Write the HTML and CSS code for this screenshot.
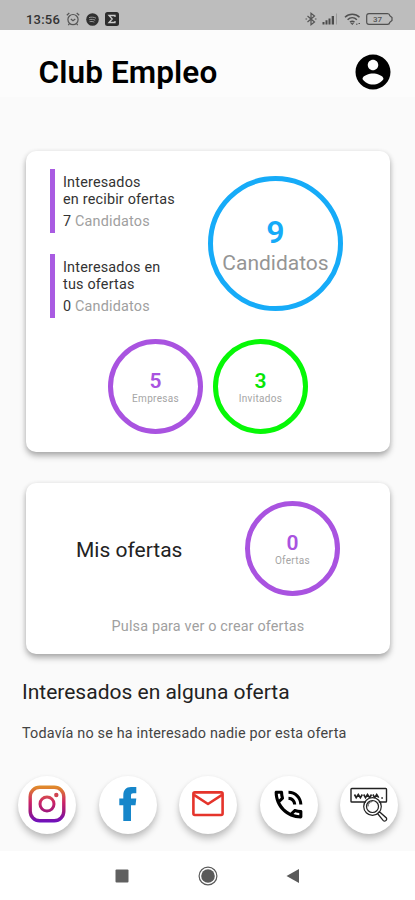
FILE: index.html
```
<!DOCTYPE html>
<html lang="es">
<head>
<meta charset="utf-8">
<title>Club Empleo</title>
<link rel="stylesheet" href="styles.css">
</head>
<body>
<div class="status">
  <span class="time">13:56</span>
  <svg class="s-alarm" width="14" height="14" viewBox="0 0 14 14" fill="none" stroke="#555" stroke-width="1.2"><circle cx="7" cy="7.6" r="5.1"/><path d="M.8 3.2 3.3 1M13.2 3.2 10.7 1M4.8 7l2.200 1.800L9.300 7M3.300 11.800l-1 1.300M10.700 11.800l1 1.300"/></svg>
  <svg class="s-spot" width="13" height="13" viewBox="0 0 13 13"><circle cx="6.500" cy="6.500" r="6.300" fill="#303030"/><path d="M3 4.600c2.500-.8 5-.5 7 .6M3.300 6.700c2.200-.6 4-.4 5.900.5M3.600 8.700c1.800-.4 3.300-.3 4.700.5" stroke="#999" fill="none"/></svg>
  <svg class="s-sigma" width="14" height="14" viewBox="0 0 14 14"><rect width="14" height="14" rx="2.500" fill="#2c2c2c"/><path d="M10 5V3.500H4L7.200 7 4 10.500h6V9" stroke="#ccc" stroke-width="1.300" fill="none"/></svg>
  <span class="spacer"></span>
  <svg class="s-bt" width="12" height="14" viewBox="0 0 12 14" fill="none" stroke="#555" stroke-width="1.200"><path d="m2.500 4 7 6L6 12.700V1.300L9.500 4l-7 6"/><path d="M.5 7h1.600M9.900 7h1.600"/></svg>
  <svg class="s-signal" width="16" height="12" viewBox="0 0 16 12"><path d="M.5 9h2v2.500h-2zM3.500 7.300h2v4.200h-2zM6.500 5.500h2v6h-2zM9.700 3h2.300v8.500H9.700z" fill="#4b4b4b"/><path d="M14 .5h1v11h-1z" fill="#999"/></svg>
  <svg class="s-wifi" width="17" height="13" viewBox="0 0 17 13" fill="none" stroke="#505050" stroke-width="1.500"><path d="M1 4.300c4-4 10.500-4 14.500 0M3.600 6.700c2.700-2.500 6.600-2.500 9.300 0M6 9.100c1.500-1.200 3-1.200 4.500 0"/><path d="m7 10.300 1.200 1.300 1.300-1.300zM12 11.200h1.500M14.500 10.500h1.500" stroke-width="1"/></svg>
  <span class="battery"><svg width="27" height="12" viewBox="0 0 27 12"><path d="M3 .7h18.500q2 0 2.300 2L26 4.500v3l-2.200 1.800q-.3 2-2.300 2H3q-2.300 0-2.300-2.300V3Q.7.700 3 .7z" fill="none" stroke="#505050" stroke-width="1.200"/></svg><b>37</b></span>
</div>

<header class="header">
  <h1>Club Empleo</h1>
  <svg width="42" height="42" viewBox="0 0 24 24"><path d="M12 2C6.480 2 2 6.480 2 12s4.480 10 10 10 10-4.480 10-10S17.520 2 12 2zm0 3c1.660 0 3 1.340 3 3s-1.340 3-3 3-3-1.340-3-3 1.340-3 3-3zm0 14.200c-2.500 0-4.710-1.280-6-3.220.03-1.990 4-3.080 6-3.080 1.990 0 5.970 1.090 6 3.080-1.290 1.940-3.500 3.220-6 3.220z"/></svg>
</header>

<main>
  <section class="card summary">
    <div class="top">
      <div class="stats">
        <div class="stat"><p>Interesados<br>en recibir ofertas</p><p class="count">7 <span>Candidatos</span></p></div>
        <div class="stat"><p>Interesados en<br>tus ofertas</p><p class="count">0 <span>Candidatos</span></p></div>
      </div>
      <div class="ring big blue"><b>9</b><span>Candidatos</span></div>
    </div>
    <div class="bottom">
      <div class="ring purple"><b>5</b><span>Empresas</span></div>
      <div class="ring green"><b>3</b><span>Invitados</span></div>
    </div>
  </section>

  <section class="card offers">
    <div class="offers-row">
      <h2>Mis ofertas</h2>
      <div class="ring purple"><b>0</b><span>Ofertas</span></div>
    </div>
    <p class="hint">Pulsa para ver o crear ofertas</p>
  </section>

  <section class="interest">
    <h2>Interesados en alguna oferta</h2>
    <p>Todavía no se ha interesado nadie por esta oferta</p>
  </section>
</main>

<div class="actions">
  <a class="fab"><svg width="38" height="38" viewBox="0 0 38 38" fill="none"><defs><linearGradient id="ig" gradientUnits="userSpaceOnUse" x1="19" y1="0" x2="19" y2="38"><stop offset=".05" stop-color="#e08a2c"/><stop offset=".45" stop-color="#cc2366"/><stop offset=".7" stop-color="#a0187c"/><stop offset="1" stop-color="#6a10c4"/></linearGradient></defs><rect x="2.200" y="2.200" width="33.600" height="33.600" rx="9.500" stroke="url(#ig)" stroke-width="3.400"/><circle cx="19" cy="19" r="7" stroke="url(#ig)" stroke-width="3"/><circle cx="28.300" cy="10" r="2.200" fill="#cf4450"/></svg></a>
  <a class="fab"><svg width="20" height="36" viewBox="0 0 20 36"><path d="M5.300 35V19.300H1.300v-6.800h4V9.500C5.300 4 8 1 13 1h5.300v6.300h-3c-1.700 0-2.300.7-2.300 2.200v3h5.300l-.8 6.800H13V35z" fill="#1686ca"/></svg></a>
  <a class="fab"><svg width="32" height="26" viewBox="0 0 32 26" fill="none" stroke="#e5342b" stroke-width="2.600" stroke-linejoin="round"><rect x="1.400" y="1.400" width="29.200" height="22.600" rx="1.500"/><path d="m2 3.800 14 9.200 14-9.200"/></svg></a>
  <a class="fab"><svg width="37" height="37" viewBox="0 0 24 24"><path d="M20 15.500c-1.250 0-2.450-.2-3.570-.57-.1-.03-.21-.05-.31-.05-.26 0-.51.1-.71.290l-2.200 2.200c-2.830-1.440-5.150-3.750-6.590-6.590l2.200-2.200c.28-.28.360-.67.250-1.020C8.700 6.450 8.500 5.250 8.500 4c0-.55-.45-1-1-1H4c-.55 0-1 .45-1 1 0 9.390 7.610 17 17 17 .55 0 1-.45 1-1v-3.500c0-.55-.45-1-1-1zM5.030 5h1.500c.07.880.220 1.750.460 2.590L5.790 8.800c-.41-1.210-.67-2.480-.76-3.800zM19 18.970c-1.320-.09-2.600-.35-3.800-.76l1.200-1.200c.85.240 1.720.390 2.600.450v1.510zM19 12h2c0-4.970-4.030-9-9-9v2c3.870 0 7 3.130 7 7zM15 12h2c0-2.760-2.240-5-5-5v2c1.660 0 3 1.340 3 3z"/></svg></a>
  <a class="fab"><svg width="38" height="35" viewBox="0 0 38 35" fill="none" stroke="#222" stroke-width="1.200"><rect x="1" y="1.500" width="35.500" height="13.500" rx=".8" stroke-width="1.400"/><path d="m4.500 7.500 1.700 3.200L8.300 7.500l2.100 3.200 1.900-3.200m1.400 0 1.800 3.200 2-3.200 2.200 3.200 1.800-3.200m1.400 0 1.800 3.200 2-3.200 2 3.200M31.300 11h1.600" stroke-width="1.600"/><path d="M16.300 13.200a8.800 8.800 0 0 1 12.400 0l.5 12-6.700 3.100-8-5z" fill="#fff" stroke="none"/><circle cx="22.500" cy="19.500" r="8.800"/><circle cx="22.500" cy="19.500" r="6"/><path d="M18 19.500q0-4.500 4.500-5" stroke-width=".8"/><path d="m27.700 26.700 1.700-2 7 6.300q.8 1.700-.8 2.800-1.300.8-2.500-.4z" fill="#fff" stroke-width="1.300"/></svg></a>
</div>

<nav class="navbar">
  <svg width="14" height="14"><rect x=".5" y=".5" width="13" height="13" rx="1" fill="#606060"/></svg>
  <svg width="20" height="20" viewBox="0 0 20 20"><circle cx="10" cy="10" r="8.900" fill="none" stroke="#5a5a5a" stroke-width="1.200"/><circle cx="10" cy="10" r="6.800" fill="#5a5a5a"/></svg>
  <svg width="14" height="16" viewBox="0 0 14 16"><path d="M.5 8 13 1v14z" fill="#5a5a5a"/></svg>
</nav>
</body>
</html>
```
FILE: styles.css
```
* { box-sizing: border-box; margin: 0; padding: 0; }
body {
  width: 415px;
  height: 900px;
  overflow: hidden;
  display: flex;
  flex-direction: column;
  background: #fafafa;
  color: #222;
  font-family: Roboto, "Liberation Sans", sans-serif;
}
.status {
  height: 30px;
  flex: none;
  background: #bdbdbd;
  display: flex;
  align-items: center;
  padding: 8px 22px 0 26px;
}
.time { width: 40px; font-size: 13px; font-weight: 500; letter-spacing: .2px; color: #333; }
.s-spot { margin-left: 6px; }
.s-sigma { margin-left: 6px; }
.spacer { flex: 1; }
.s-signal { margin-left: 5px; }
.s-wifi { margin-left: 6px; }
.battery { display: grid; place-items: center start; margin-left: 5px; }
.battery svg, .battery b { grid-area: 1 / 1; }
.battery b { padding-left: 7px; font-size: 8px; font-weight: 500; color: #555; }
.header {
  height: 67px;
  flex: none;
  background: #fcfcfc;
  display: flex;
  align-items: flex-start;
  justify-content: space-between;
  padding: 21px 21px 0 38.500px;
}
h1 { font-size: 31.500px; line-height: 43px; font-weight: 600; letter-spacing: .1px; color: #000; }
main { padding: 54px 25px 0 26px; }
.card {
  background: #fff;
  border-radius: 10px;
  box-shadow: 0 4px 6px rgba(0, 0, 0, .28), 0 1px 5px rgba(0, 0, 0, .1);
}
.summary { height: 301px; padding: 18px 47px 0 24px; }
.top { display: flex; justify-content: space-between; }
.stats { display: flex; flex-direction: column; gap: 21px; }
.stat {
  height: 64px;
  border-left: 5px solid #a95be2;
  padding: 5px 0 0 8px;
  font-size: 14.400px;
  letter-spacing: .19px;
  line-height: 17px;
  color: #333;
}
.count { margin-top: 5px; }
.count span { color: #a0a0a0; }
.ring {
  width: 95px;
  height: 95px;
  border: 5px solid;
  border-radius: 50%;
  display: flex;
  flex-direction: column;
  align-items: center;
  padding-top: 25px;
}
.ring b { font-size: 21px; line-height: 24px; font-weight: 600; }
.ring span { font-size: 10px; line-height: 12px; letter-spacing: .3px; color: #a5a5a5; }
.ring.big { width: 135px; height: 135px; margin-top: 7px; padding-top: 33px; }
.big b { font-size: 32px; line-height: 36px; }
.big span { font-size: 21px; line-height: 26px; letter-spacing: 0; color: #959595; }
.blue { border-color: #16abf8; color: #16abf8; }
.purple { border-color: #a953e0; color: #a953e0; }
.green { border-color: #06f806; color: #06e606; }
.bottom { display: flex; gap: 10px; padding: 21px 0 0 58px; }
.offers { height: 171px; margin-top: 31px; padding-top: 18px; }
.offers-row { display: flex; align-items: center; justify-content: space-between; padding: 0 50px; }
.offers h2 { padding-top: 2px; font-size: 21px; font-weight: 400; line-height: 24px; }
.hint { margin-top: 22px; text-align: center; font-size: 14.400px; line-height: 18px; letter-spacing: .16px; color: #a0a0a0; }
.interest { margin: 26px 0 0 -4px; }
.interest h2 { font-size: 21px; font-weight: 400; line-height: 24px; }
.interest p { margin-top: 21px; font-size: 14.400px; line-height: 18px; letter-spacing: .18px; color: #444; }
.actions {
  flex: 1;
  display: flex;
  justify-content: space-between;
  align-items: flex-end;
  padding: 0 17px 17px 18px;
}
.fab {
  width: 58px;
  height: 58px;
  padding-bottom: 2px;
  border-radius: 50%;
  background: #fff;
  display: flex;
  align-items: center;
  justify-content: center;
  box-shadow: 0 5px 7px rgba(0, 0, 0, .22), 0 1px 4px rgba(0, 0, 0, .06);
}
.navbar {
  height: 49px;
  flex: none;
  background: #fff;
  display: flex;
  align-items: center;
  justify-content: space-between;
  padding: 0 115px;
}
```
